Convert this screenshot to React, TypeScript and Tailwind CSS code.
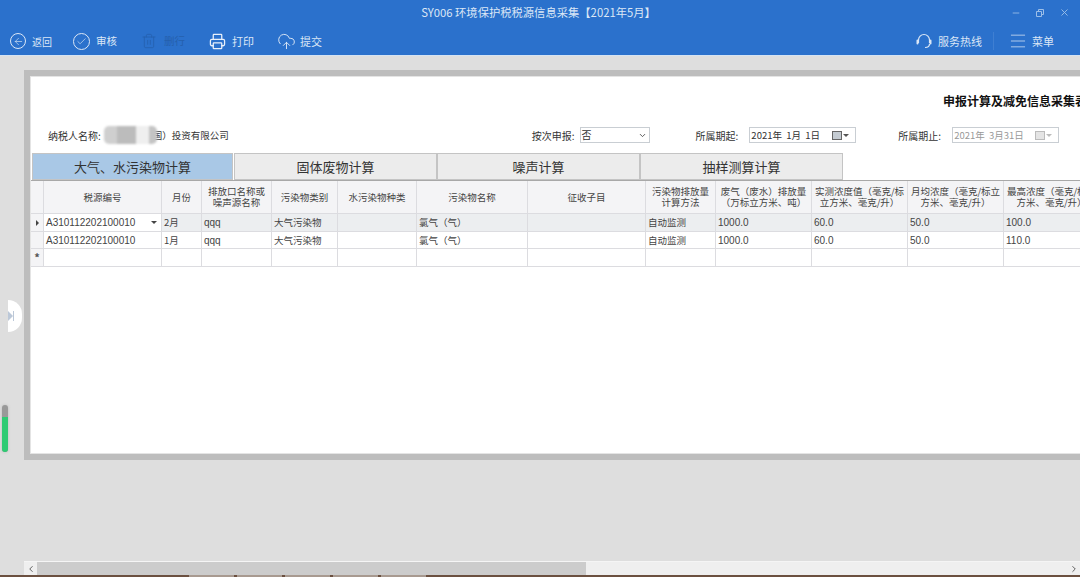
import React from 'react';
import { ArrowLeft, Check, Trash2, Printer, CloudUpload, Minus, X, ChevronDown, ChevronLeft, ChevronRight, Menu } from 'lucide-react';

const COLS = 'grid grid-cols-[13px_118px_40px_70px_66px_79px_111px_118px_70px_96px_96px_96px_96px]';

const headers = [
  '',
  '税源编号',
  '月份',
  '排放口名称或\n噪声源名称',
  '污染物类别',
  '水污染物种类',
  '污染物名称',
  '征收子目',
  '污染物排放量\n计算方法',
  '废气（废水）排放量\n（万标立方米、吨）',
  '实测浓度值（毫克/标\n立方米、毫克/升）',
  '月均浓度（毫克/标立\n方米、毫克/升）',
  '最高浓度（毫克/标立\n方米、毫克/升）',
];

const rows = [
  ['A310112202100010', '2月', 'qqq', '大气污染物', '', '氯气（气）', '', '自动监测', '1000.0', '60.0', '50.0', '100.0'],
  ['A310112202100010', '1月', 'qqq', '大气污染物', '', '氯气（气）', '', '自动监测', '1000.0', '60.0', '50.0', '110.0'],
  ['', '', '', '', '', '', '', '', '', '', '', ''],
];

const tabs = ['大气、水污染物计算', '固体废物计算', '噪声计算', '抽样测算计算'];

function DateField({ value, disabled }: { value: string; disabled?: boolean }) {
  return (
    <div className={`flex h-4 w-[107px] items-center border border-[#c9ced3] bg-white pl-[1px] pr-[6px] ${disabled ? 'text-[#999]' : 'text-[#333]'}`}>
      <span className="flex-1 whitespace-pre text-[9.5px]">{value}</span>
      <span className={`h-[9px] w-[10px] border ${disabled ? 'border-[#bbb] bg-[#e4e4e4]' : 'border-[#666] bg-[#c4cbd2]'}`} />
      <span className={`ml-[1px] h-0 w-0 border-x-[3px] border-t-[3px] border-x-transparent ${disabled ? 'border-t-[#bbb]' : 'border-t-[#555]'}`} />
    </div>
  );
}

export default function App() {
  return (
    <div className="relative flex h-[577px] w-[1080px] flex-col overflow-hidden bg-[#dedede] font-['Noto_Sans_CJK_SC','Liberation_Sans',sans-serif] text-[#333]">
      {/* blue header */}
      <div className="h-[56px] shrink-0 border-b border-[#d5e3f3] bg-[#2b71cc] text-[#dbe7f6]">
        <div className="relative flex h-[27px] items-center justify-center pb-[3px] text-[11.3px]">
          <span className="ml-[-3px]">SY006 环境保护税税源信息采集【2021年5月】</span>
          <div className="absolute right-[10px] top-[7px] flex items-center gap-[14px] text-[#9dbfe8]">
            <Minus size={10} />
            <svg width="10" height="10" viewBox="0 0 10 10" fill="none" stroke="currentColor">
              <path d="M1.5 3.5h5v5h-5z M3.5 3.5v-2h5v5h-2" />
            </svg>
            <X size={11} />
          </div>
        </div>
        <div className="flex h-[28px] items-center pl-[10px] text-[10.5px]">
          <span className="flex h-4 w-4 items-center justify-center rounded-full border border-[#dbe7f6]">
            <ArrowLeft size={11} strokeWidth={1.4} />
          </span>
          <span className="ml-[6px] text-[10px]">返回</span>
          <span className="ml-[21px] flex h-[17px] w-[17px] items-center justify-center rounded-full border border-[#dbe7f6]">
            <Check size={11} strokeWidth={1.4} />
          </span>
          <span className="ml-[6px]">审核</span>
          <Trash2 size={16} strokeWidth={1.2} className="ml-[24px] text-[#2560ad]" />
          <span className="ml-[7px] text-[#2560ad]">删行</span>
          <Printer size={17} strokeWidth={1.8} className="ml-[24px] text-[#e8f0fa]" />
          <span className="ml-[6px] text-[11px]">打印</span>
          <CloudUpload size={19} strokeWidth={1.2} className="ml-[23px]" />
          <span className="ml-[4px] text-[11px]">提交</span>
          <div className="ml-auto flex items-center pr-[26px] text-[11px]">
            <svg width="16" height="17" viewBox="0 0 16 17" fill="none" stroke="currentColor" strokeWidth="1.2">
              <path d="M2.5 10V7a5.5 5.5 0 0 1 11 0v3" />
              <path d="M1.5 7.5v3M14.5 7.5v3" strokeWidth="2" strokeLinecap="round" />
              <path d="M13.5 11c0 2.5-2 3.5-4.5 3.5" />
            </svg>
            <span className="ml-[6px]">服务热线</span>
            <span className="ml-[11px] h-[18px] w-px bg-[#3f7fd2]" />
            <Menu size={20} strokeWidth={0.9} className="ml-[14px]" />
            <span className="ml-[4px]">菜单</span>
          </div>
        </div>
      </div>

      {/* main panel */}
      <div className="flex-1">
        <div className="ml-[24px] mt-[14px] h-[390px] w-[1110px] border-[6px] border-[#bdbdbd] bg-white">
          <div className="h-full border border-[#e4e4e4]">
            <div className="h-[49px] pl-[912px] pt-[15px] text-[12px] font-bold leading-[18px] text-[#111]">
              <span className="whitespace-nowrap">申报计算及减免信息采集表</span>
            </div>
            <div className="flex h-[18px] items-center text-[10px] text-[#333]">
              <span className="ml-[17px]">纳税人名称:</span>
              <span className="relative z-10 ml-[3px] flex h-[18px] w-[53px] overflow-hidden rounded-[5px] blur-[1px]">
                <span className="w-[13px] bg-[#cfcfcf]" />
                <span className="w-[19px] bg-[#bcbcbc]" />
                <span className="w-[13px] bg-[#efefef]" />
                <span className="w-[8px] bg-[#c4c4c4]" />
              </span>
              <span className="ml-[-4px] text-[9.5px]">国）投资有限公司</span>
              <span className="ml-[303px]">按次申报:</span>
              <div className="ml-[5px] flex h-4 w-[70px] items-center border border-[#c9ced3] pl-[1px] pr-[2px] text-[#333]">
                <span className="flex-1 leading-none">否</span>
                <ChevronDown size={9} strokeWidth={2.5} className="text-[#555]" />
              </div>
              <span className="ml-[46px]">所属期起:</span>
              <span className="ml-[11px]"><DateField value="2021年  1月  1日" /></span>
              <span className="ml-[42px]">所属期止:</span>
              <span className="ml-[11px]"><DateField value="2021年  3月31日" disabled /></span>
            </div>

            <div className="mt-[9px] flex h-[27px] pl-[1px]">
              {tabs.map((tab, i) => (
                <div
                  key={tab}
                  className={`flex items-center justify-center border border-[#c4c4c4] text-[13px] text-[#333] ${i === 0 ? 'mr-px w-[201px] bg-[#a9c8e6]' : 'w-[203px] bg-[#ececec]'}`}
                >
                  {tab}
                </div>
              ))}
            </div>

            <div className="border-t border-[#a8a8a8]">
              <div className={`${COLS} h-[33px] bg-[#f4f4f6] text-[9.5px] leading-[11px] text-[#444]`}>
                {headers.map((h, i) => (
                  <div key={i} className="flex items-center justify-center whitespace-pre border-b border-r border-[#dcdce0] text-center">
                    {h}
                  </div>
                ))}
              </div>
              {rows.map((row, r) => (
                <div key={r} className={`${COLS} ${r === 0 ? 'h-[18px] bg-[#eceef0]' : 'h-[17px] bg-white'} text-[9.5px] text-[#444]`}>
                  <div className={`flex items-center justify-center border-b border-r border-[#dcdce0] bg-[#f4f4f6] text-[#555] ${r === 2 ? 'text-[11px] font-bold' : ''}`}>
                    {r === 0 && <span className="h-0 w-0 border-y-[3px] border-l-[3px] border-y-transparent border-l-[#444]" />}
                    {r === 2 && '*'}
                  </div>
                  {row.map((cell, c) => (
                    <div
                      key={c}
                      className={`flex items-center whitespace-nowrap border-b border-r border-[#dcdce0] pl-[2px] ${r === 0 && c === 0 ? 'bg-white' : ''} ${c === 0 || (c >= 8 && c <= 11) || c === 2 ? "font-['Liberation_Sans'] text-[10px]" : ''}`}
                    >
                      <span className="flex-1">{cell}</span>
                      {r === 0 && c === 0 && <span className="mr-[4px] h-0 w-0 border-x-[3px] border-t-[3px] border-x-transparent border-t-[#444]" />}
                    </div>
                  ))}
                </div>
              ))}
            </div>
          </div>
        </div>
      </div>

      {/* horizontal scrollbar */}
      <div className="ml-[24px] flex h-[14px] shrink-0 items-center border-t border-[#f5f5f5] bg-[#efefef]">
        <ChevronLeft size={10} strokeWidth={2} className="ml-[1px] w-[12px] text-[#444]" />
        <div className="h-full w-[549px] bg-[#cccccc]" />
        <ChevronRight size={10} strokeWidth={2} className="ml-auto mr-[1px] text-[#444]" />
      </div>

      {/* taskbar edge */}
      <div className="flex h-[2px] shrink-0 gap-[3px] bg-[#6b5040] pl-[189px]">
        {[0, 1, 2, 3, 4].map((n) => (
          <span key={n} className="h-full w-[45px] bg-[#a89a90]" />
        ))}
      </div>

      {/* side handle */}
      <div className="absolute left-[8px] top-[300px] flex h-[32px] w-[14px] items-center rounded-r-full bg-white">
        <span className="h-0 w-0 border-y-[5px] border-l-[5px] border-y-transparent border-l-[#bcc8d8]" />
        <span className="h-[10px] w-px bg-[#bcc8d8]" />
      </div>

      {/* green level meter */}
      <div className="absolute left-[2px] top-[405px] flex h-[47px] w-[6px] flex-col overflow-hidden rounded-full bg-[#999] shadow-[0_0_3px_#bbb]">
        <span className="h-[12px]" />
        <span className="flex-1 bg-[#2ecb73]" />
      </div>
    </div>
  );
}
